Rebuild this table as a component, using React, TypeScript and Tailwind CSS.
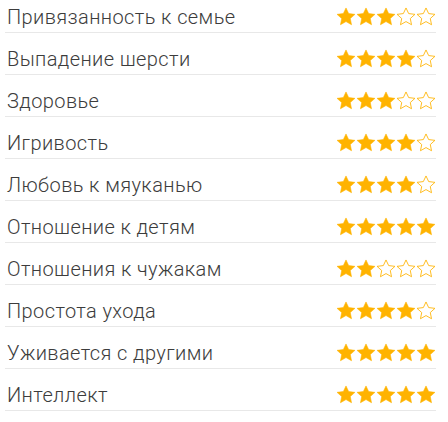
const rows: [string, number][] = [
  ["Привязанность к семье", 3],
  ["Выпадение шерсти", 4],
  ["Здоровье", 3],
  ["Игривость", 4],
  ["Любовь к мяуканью", 4],
  ["Отношение к детям", 5],
  ["Отношения к чужакам", 2],
  ["Простота ухода", 4],
  ["Уживается с другими", 5],
  ["Интеллект", 5],
]

const Star = ({ filled }: { filled: boolean }) => (
  <svg viewBox="-0.5 -0.6 21 19.4" className="w-[20px] h-[18.5px]">
    <polygon
      points="10,0.4 12.8,6.3 19.4,7.1 14.5,11.5 15.8,18 10,14.7 4.2,18 5.5,11.5 0.6,7.1 7.2,6.3"
      fill={filled ? "#ffb300" : "#fff"}
      stroke="#ffb300"
      strokeWidth={filled ? 0.6 : 0.9}
      strokeLinejoin="round"
    />
  </svg>
)

export default function App() {
  return (
    <div className="w-[448px] h-[422px] bg-white overflow-hidden font-['Roboto',sans-serif]">
      <div className="mt-[-9px] pl-[5px] pr-[12px]">
        {rows.map(([label, n]) => (
          <div
            key={label}
            className="h-[42px] box-border pt-[10px] flex items-center justify-between border-b border-[#e8e8e8]"
          >
            <span className="pl-[2px] text-[20px] tracking-[0.4px] font-light text-[#3c3c3c] leading-none">
              {label}
            </span>
            <div className="flex">
              {[0, 1, 2, 3, 4].map((i) => (
                <Star key={i} filled={i < n} />
              ))}
            </div>
          </div>
        ))}
      </div>
    </div>
  )
}
